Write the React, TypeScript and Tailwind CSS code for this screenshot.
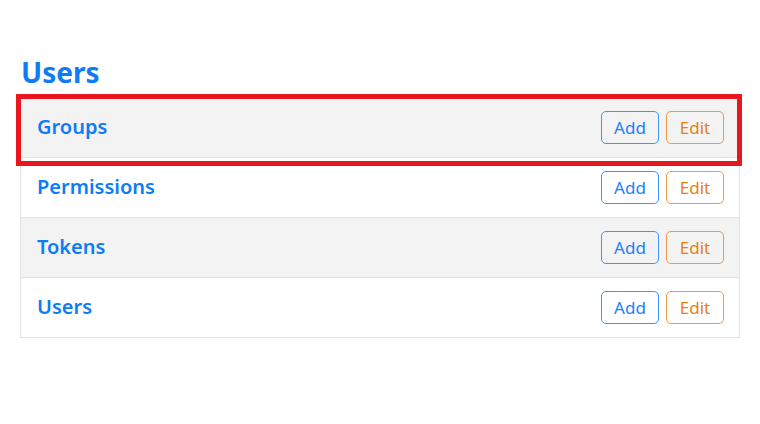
const rows = ['Groups', 'Permissions', 'Tokens', 'Users'];

export default function App() {
  return (
    <div className="min-h-[424px] w-[760px] bg-white font-['Noto_Sans',sans-serif]">
      <div className="px-5 pt-[55px]">
        <h1 className="pl-px text-[28px] font-bold leading-[34px] text-[#0d7cf5]">Users</h1>
        <div className="relative mt-[8px] border-x border-t border-[#e3e3e3]">
          {rows.map((name, index) => (
            <div
              key={name}
              className={`flex h-[60px] items-center justify-between border-b border-[#e3e3e3] pl-4 pr-[15px] ${
                index % 2 === 0 ? 'bg-[#f3f3f3]' : 'bg-white'
              }`}
            >
              <span className="pb-[2px] text-[20px] font-semibold text-[#0d7cf5]">{name}</span>
              <div className="flex gap-[7px]">
                <button
                  type="button"
                  className="h-[33px] w-[58px] rounded-[5px] border border-[#3d95ff] text-[17px] text-[#1a80ff]"
                >
                  Add
                </button>
                <button
                  type="button"
                  className="h-[33px] w-[58px] rounded-[5px] border border-[#eb9a45] text-[17px] text-[#e5820f]"
                >
                  Edit
                </button>
              </div>
            </div>
          ))}
          <div className="pointer-events-none absolute left-[-5px] top-[-4px] h-[72px] w-[726px] border-[5px] border-[#e8161f]" />
        </div>
      </div>
    </div>
  );
}
